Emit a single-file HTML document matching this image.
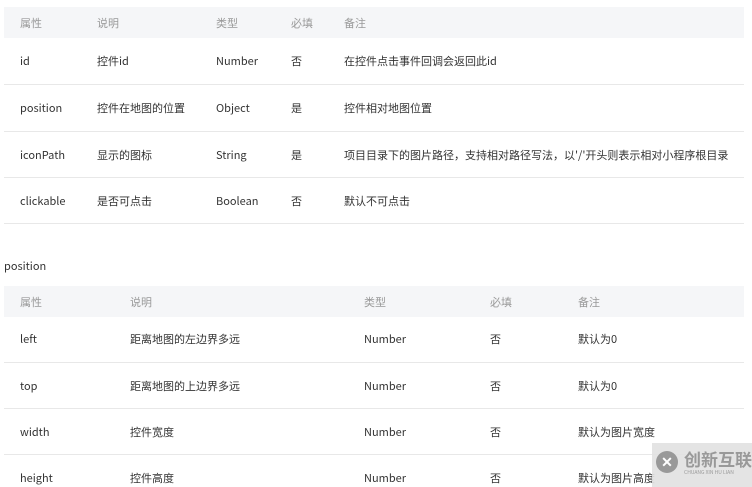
<html><head><style>
body{margin:0;width:752px;height:487px;overflow:hidden;background:#fff;font-family:"Noto Sans CJK SC","Liberation Sans",sans-serif;font-size:11px;line-height:14px;color:#333;position:relative}
.a{position:absolute;white-space:nowrap}
.h{position:absolute;left:4px;width:740px;background:#f5f6f8}
.l{position:absolute;left:4px;width:740px;height:1px;background:#e8e8e8}
.g{color:#999}
</style></head><body>
<div class="h" style="top:7px;height:31px"></div>
<div class="a g" style="left:20px;top:16px">属性</div><div class="a g" style="left:97px;top:16px">说明</div><div class="a g" style="left:216px;top:16px">类型</div><div class="a g" style="left:291px;top:16px">必填</div><div class="a g" style="left:344px;top:16px">备注</div>
<div class="a" style="left:20px;top:54px">id</div><div class="a" style="left:97px;top:54px">控件id</div><div class="a" style="left:216px;top:54px">Number</div><div class="a" style="left:291px;top:54px">否</div><div class="a" style="left:344px;top:54px">在控件点击事件回调会返回此id</div>
<div class="l" style="top:84px"></div>
<div class="a" style="left:20px;top:101px">position</div><div class="a" style="left:97px;top:101px">控件在地图的位置</div><div class="a" style="left:216px;top:101px">Object</div><div class="a" style="left:291px;top:101px">是</div><div class="a" style="left:344px;top:101px">控件相对地图位置</div>
<div class="l" style="top:131px"></div>
<div class="a" style="left:20px;top:148px">iconPath</div><div class="a" style="left:97px;top:148px">显示的图标</div><div class="a" style="left:216px;top:148px">String</div><div class="a" style="left:291px;top:148px">是</div><div class="a" style="left:344px;top:148px">项目目录下的图片路径，支持相对路径写法，以'/'开头则表示相对小程序根目录</div>
<div class="l" style="top:177px"></div>
<div class="a" style="left:20px;top:194px">clickable</div><div class="a" style="left:97px;top:194px">是否可点击</div><div class="a" style="left:216px;top:194px">Boolean</div><div class="a" style="left:291px;top:194px">否</div><div class="a" style="left:344px;top:194px">默认不可点击</div>
<div class="l" style="top:223px"></div>
<div class="a" style="left:4px;top:259px">position</div>
<div class="h" style="top:286px;height:31px"></div>
<div class="a g" style="left:20px;top:295px">属性</div><div class="a g" style="left:130px;top:295px">说明</div><div class="a g" style="left:364px;top:295px">类型</div><div class="a g" style="left:490px;top:295px">必填</div><div class="a g" style="left:578px;top:295px">备注</div>
<div class="a" style="left:20px;top:332px">left</div><div class="a" style="left:130px;top:332px">距离地图的左边界多远</div><div class="a" style="left:364px;top:332px">Number</div><div class="a" style="left:490px;top:332px">否</div><div class="a" style="left:578px;top:332px">默认为0</div>
<div class="l" style="top:362px"></div>
<div class="a" style="left:20px;top:379px">top</div><div class="a" style="left:130px;top:379px">距离地图的上边界多远</div><div class="a" style="left:364px;top:379px">Number</div><div class="a" style="left:490px;top:379px">否</div><div class="a" style="left:578px;top:379px">默认为0</div>
<div class="l" style="top:408px"></div>
<div class="a" style="left:20px;top:425px">width</div><div class="a" style="left:130px;top:425px">控件宽度</div><div class="a" style="left:364px;top:425px">Number</div><div class="a" style="left:490px;top:425px">否</div><div class="a" style="left:578px;top:425px">默认为图片宽度</div>
<div class="l" style="top:454px"></div>
<div class="a" style="left:20px;top:471px">height</div><div class="a" style="left:130px;top:471px">控件高度</div><div class="a" style="left:364px;top:471px">Number</div><div class="a" style="left:490px;top:471px">否</div><div class="a" style="left:578px;top:471px">默认为图片高度</div>
<div style="position:absolute;left:652px;top:443px;width:100px;height:44px;background:rgba(225,225,225,.9)"></div>
<div class="a" style="left:656px;top:451px;width:22px;height:22px;border-radius:50%;background:#999;color:#fff;font-weight:bold;font-size:14px;text-align:center;line-height:22px">✕</div>
<div class="a" style="left:684px;top:449px;font-size:17px;line-height:20px;color:#999;font-weight:bold">创新互联</div>
<div class="a" style="left:684px;top:470px;font-size:5px;line-height:6px;color:#999">CHUANG XIN HU LIAN</div>
</body></html>
